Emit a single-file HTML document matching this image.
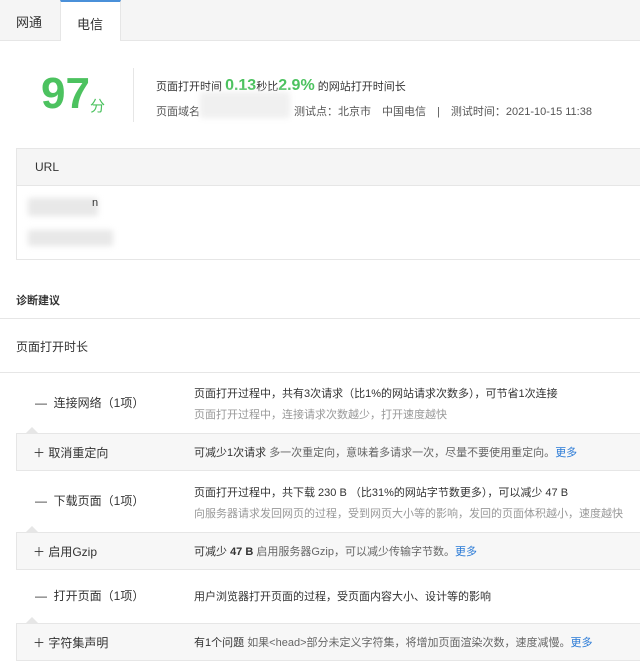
<html><head><style>
body{margin:0;width:640px;height:665px;overflow:hidden;background:#fff;font-family:"Liberation Sans","Noto Sans CJK SC",sans-serif;font-size:12px;color:#333;position:relative}
.a{position:absolute;white-space:nowrap}
.g{color:#4cc25f}
.sub{position:absolute;left:16px;right:-2px;height:36px;background:#f7f7f7;border:1px solid #e6e6e6}
.sub .a{top:10px}
.l{color:#2a7ad6}
.c{color:#999}
.blur{position:absolute;background:#e8e8e8;filter:blur(3px)}
.tri{position:absolute;left:26px;width:0;height:0;border-left:6px solid transparent;border-right:6px solid transparent;border-bottom:6px solid #e6e6e6}
</style></head><body>
<div style="position:absolute;left:0;top:0;width:640px;height:40px;background:#f5f5f5;border-bottom:1px solid #e6e6e6"></div>
<div style="position:absolute;left:60px;top:0;width:61px;height:41px;background:#fff;border-top:2px solid #4a90d9;box-sizing:border-box;border-left:1px solid #e6e6e6;border-right:1px solid #e6e6e6"></div>
<div class="a" style="left:16px;top:12px;font-size:13px">网通</div>
<div class="a" style="left:77px;top:14px;font-size:13px">电信</div>
<div class="a g" style="left:41px;top:70px;font-size:44px;font-weight:bold;line-height:48px">97</div>
<div class="a g" style="left:90px;top:95px;font-size:15px">分</div>
<div style="position:absolute;left:133px;top:68px;width:1px;height:54px;background:#e6e6e6"></div>
<div class="a" style="left:156px;top:77px;font-size:11px">页面打开时间 <span class="g" style="font-size:16px;font-weight:bold">0.13</span>秒比<span class="g" style="font-size:16px;font-weight:bold">2.9%</span> 的网站打开时间长</div>
<div class="a" style="left:156px;top:103px;font-size:11px;color:#555">页面域名 <span style="display:inline-block;width:80px"></span>　测试点：北京市　中国电信　|　测试时间：2021-10-15 11:38</div>
<div class="blur" style="left:200px;top:92px;width:90px;height:26px;background:#f0f0f0"></div>
<div style="position:absolute;left:16px;top:148px;width:640px;height:110px;border:1px solid #e6e6e6"></div>
<div style="position:absolute;left:17px;top:149px;width:630px;height:36px;background:#f5f5f5;border-bottom:1px solid #e6e6e6"></div>
<div class="a" style="left:35px;top:160px">URL</div>
<div class="blur" style="left:28px;top:198px;width:70px;height:18px"></div>
<div class="a" style="left:92px;top:197px;font-size:11px">n</div>
<div class="blur" style="left:28px;top:230px;width:85px;height:16px"></div>
<div class="a" style="left:16px;top:292px;font-weight:bold;font-size:11px">诊断建议</div>
<div style="position:absolute;left:0;top:318px;width:640px;height:1px;background:#e6e6e6"></div>
<div class="a" style="left:16px;top:338px">页面打开时长</div>
<div style="position:absolute;left:0;top:372px;width:640px;height:1px;background:#e6e6e6"></div>

<div class="a" style="left:35px;top:394px">—&nbsp; 连接网络（1项）</div>
<div class="a" style="left:194px;top:385px;font-size:11px">页面打开过程中，共有3次请求（比1%的网站请求次数多），可节省1次连接</div>
<div class="a c" style="left:194px;top:406px;font-size:11px">页面打开过程中，连接请求次数越少，打开速度越快</div>
<div class="tri" style="top:427px"></div>
<div class="sub" style="top:433px"><div class="a" style="left:16px">＋ 取消重定向</div><div class="a" style="left:177px;font-size:11px">可减少1次请求 <span style="color:#666">多一次重定向，意味着多请求一次，尽量不要使用重定向。</span><span class="l">更多</span></div></div>

<div class="a" style="left:35px;top:492px">—&nbsp; 下载页面（1项）</div>
<div class="a" style="left:194px;top:484px;font-size:11px">页面打开过程中，共下载 230 B （比31%的网站字节数更多），可以减少 47 B</div>
<div class="a c" style="left:194px;top:505px;font-size:11px">向服务器请求发回网页的过程，受到网页大小等的影响，发回的页面体积越小，速度越快</div>
<div class="tri" style="top:526px"></div>
<div class="sub" style="top:532px"><div class="a" style="left:16px">＋ 启用Gzip</div><div class="a" style="left:177px;font-size:11px">可减少 <b>47 B</b> <span style="color:#666">启用服务器Gzip，可以减少传输字节数。</span><span class="l">更多</span></div></div>

<div class="a" style="left:35px;top:587px">—&nbsp; 打开页面（1项）</div>
<div class="a" style="left:194px;top:588px;font-size:11px">用户浏览器打开页面的过程，受页面内容大小、设计等的影响</div>
<div class="tri" style="top:617px"></div>
<div class="sub" style="top:623px"><div class="a" style="left:16px">＋ 字符集声明</div><div class="a" style="left:177px;font-size:11px">有1个问题 <span style="color:#666">如果&lt;head&gt;部分未定义字符集，将增加页面渲染次数，速度减慢。</span><span class="l">更多</span></div></div>
</body></html>
